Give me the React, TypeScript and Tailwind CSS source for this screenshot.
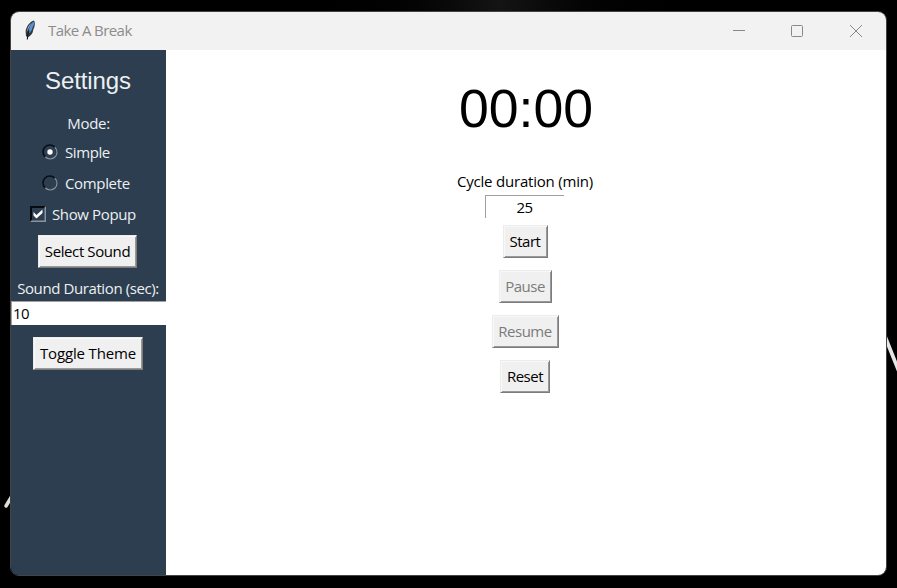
import React from "react";

const uiFont = "font-['Open_Sans','Noto_Sans',sans-serif]";

function Feather() {
  return (
    <svg width="14" height="22" viewBox="0 0 14 22" className="block">
      <path d="M11 1.5C7 2.5 3.5 7 2.6 12L3 17L4.6 18.5C8 16.5 10 14 10.2 11L11.5 7.5C12 5 12 3 11 1.5Z" fill="#33373d" />
      <path d="M10.8 2.6C8 4.5 6.2 8 5 15C8.2 12.5 9.4 10.5 9.5 8.5C10.8 7 11.2 5 10.8 2.6Z" fill="#5394dc" />
      <path d="M8.8 3.6C6 6 4 9.5 3.6 13.5C5.2 10 6.7 7 8.8 3.6Z" fill="#a9b9c9" />
      <path d="M6 11.5C5 14.5 4.5 17 4.3 20.5" stroke="#16181b" strokeWidth="1.1" fill="none" />
    </svg>
  );
}

function TitleBar() {
  return (
    <header className="flex h-[38px] shrink-0 items-center bg-[#f2f2f2] text-[#8c8c8c]">
      <div className="ml-[12px] w-[25px] pb-0.5"><Feather /></div>
      <span className="pb-px text-[15px] tracking-[-0.58px]">Take A Break</span>
      <div className="ml-auto flex h-full items-center">
        <svg width="12" height="12" viewBox="0 0 12 12" className="mr-[46px]"><path d="M0 5.5H12" stroke="#888" /></svg>
        <svg width="12" height="12" viewBox="0 0 12 12" className="mr-[47px]" fill="none"><rect x=".5" y=".5" width="11" height="11" rx="1" stroke="#888" /></svg>
        <svg width="12" height="12" viewBox="0 0 12 12" className="mr-[24px]"><path d="M0 0L12 12M12 0L0 12" stroke="#888" /></svg>
      </div>
    </header>
  );
}

function RaisedButton({ children, className, disabled = false }: { children: React.ReactNode; className: string; disabled?: boolean }) {
  return (
    <button
      disabled={disabled}
      className={`flex h-[33px] shrink-0 items-center justify-center whitespace-nowrap border border-t-[#ececec] border-l-[#ececec] border-r-[#7c7c7c] border-b-[#7c7c7c] bg-[#f0f0f0] pb-px text-[15px] shadow-[inset_1px_1px_#f8f8f8,inset_-1px_-1px_#999] ${disabled ? "text-[#7b7b7b]" : "text-black"} ${className}`}
    >
      {children}
    </button>
  );
}

function Radio({ checked }: { checked: boolean }) {
  return (
    <svg width="16" height="16" viewBox="0 0 16 16" fill="none">
      <path d="M3 12.6A6.6 6.6 0 0 1 12.6 3" stroke="#0b0f14" strokeWidth="1.7" />
      <path d="M13 3.4A6.6 6.6 0 0 1 3.4 13" stroke="#8a97a3" strokeWidth="1.1" />
      {checked && <circle cx="8" cy="8" r="2.7" fill="#fff" />}
    </svg>
  );
}

function Sidebar() {
  return (
    <aside className="flex w-[155px] shrink-0 flex-col items-center bg-[#2c3e50] text-[15px] text-[#ecf0f1]">
      <h1 className="mt-[15px] mr-px h-8 font-['Liberation_Sans',Arial,sans-serif] text-[24px] leading-8 tracking-[-0.1px]">Settings</h1>
      <div className="mt-[14px] h-6 leading-6 tracking-[-0.3px]">Mode:</div>
      <label className="mt-[5px] flex h-6 w-full items-center pl-[31px]">
        <Radio checked />
        <span className="ml-[7px] tracking-[-0.4px]">Simple</span>
      </label>
      <label className="mt-[7px] flex h-6 w-full items-center pl-[31px]">
        <Radio checked={false} />
        <span className="ml-[7px] tracking-[-0.35px]">Complete</span>
      </label>
      <label className="mt-[7px] flex h-6 w-full items-center pl-[19px]">
        <svg width="16" height="16" viewBox="0 0 16 16">
          <path d="M0 16V0H16L14 2H2V14Z" fill="#080c10" />
          <path d="M16 0V16H0L1.5 14.5H14.5V1.5Z" fill="#8895a1" />
          <path d="M3.5 6L6.5 9L12.5 3.5V7L6.5 12.5L3.5 9.5Z" fill="#fff" />
        </svg>
        <span className="ml-[6px] tracking-[-0.37px]">Show Popup</span>
      </label>
      <RaisedButton className="mt-[9px] mr-[2px] w-[99px] tracking-[-0.4px]">Select Sound</RaisedButton>
      <div className="mt-[9px] mr-px h-6 whitespace-nowrap leading-[23px] tracking-[-0.4px]">Sound Duration (sec):</div>
      <input readOnly value="10" className="h-6 w-full border-t border-l border-t-[#a0a0a0] border-l-[#a0a0a0] bg-white pb-px pl-px text-[15px] tracking-[-0.6px] text-black outline-none" />
      <RaisedButton className="mt-3 mr-px w-[110px] tracking-[-0.15px]">Toggle Theme</RaisedButton>
    </aside>
  );
}

function Timer() {
  return (
    <main className="flex grow flex-col items-center bg-white pr-[2px] text-[15px] text-black">
      <div className="mt-[26px] ml-[2px] h-16 font-['Liberation_Sans',Arial,sans-serif] text-[53.6px] leading-[64px]">00:00</div>
      <div className="mt-[29px] h-6 leading-6 tracking-[-0.2px]">Cycle duration (min)</div>
      <input readOnly value="25" className="mt-[2px] mr-[2px] h-[23px] w-[79px] border-t border-l border-[#a0a0a0] bg-white pb-px text-center text-[15px] tracking-[-0.6px] outline-none" />
      <RaisedButton className="mt-[7px] w-[45px] tracking-[-0.5px]">Start</RaisedButton>
      <RaisedButton disabled className="mt-[12px] w-[53px] tracking-[-0.5px]">Pause</RaisedButton>
      <RaisedButton disabled className="mt-[12px] w-[67px] tracking-[-0.5px]">Resume</RaisedButton>
      <RaisedButton className="mt-[12px] w-[50px] tracking-[-0.5px]">Reset</RaisedButton>
    </main>
  );
}

export default function App() {
  return (
    <div className={`relative h-[588px] w-[897px] overflow-hidden bg-black pt-[11px] pl-[10px] ${uiFont}`}>
      <div className="absolute top-0 left-[300px] h-3 w-[400px] bg-linear-to-r from-black via-[#141414] to-black" />
      <svg width="897" height="588" className="absolute top-0 left-0" fill="none">
        <path d="M882 329L900 374" stroke="#e6e6e6" strokeWidth="3.8" />
        <path d="M6 506L18 486" stroke="#deded9" strokeWidth="3.5" strokeLinecap="round" />
      </svg>
      <div className="relative flex h-[565px] w-[877px] flex-col overflow-hidden rounded-[9px] border border-[#444]">
        <TitleBar />
        <div className="flex grow">
          <Sidebar />
          <Timer />
        </div>
      </div>
    </div>
  );
}
